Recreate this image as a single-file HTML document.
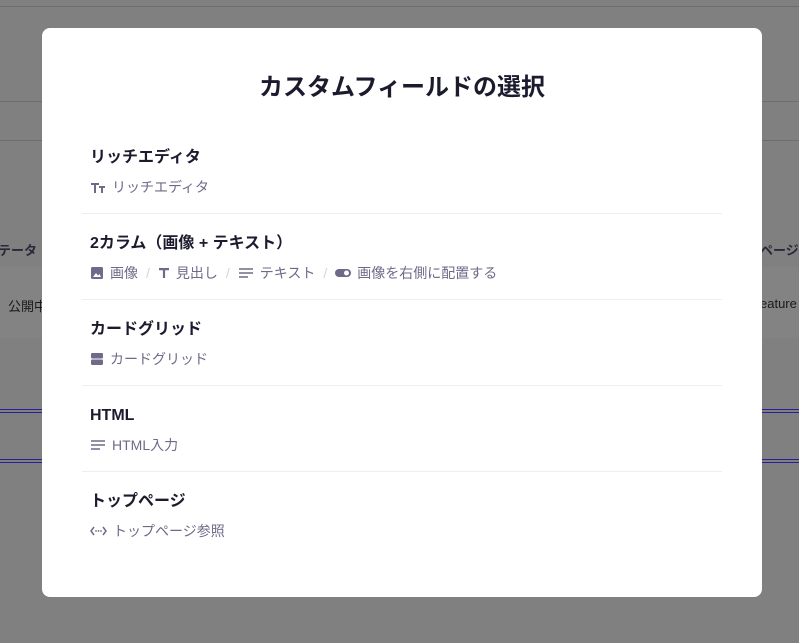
<!DOCTYPE html>
<html><head><meta charset="utf-8"><style>
body{margin:0;width:799px;height:643px;background:#808080;position:relative;overflow:hidden;font-family:"Liberation Sans","Noto Sans CJK JP",sans-serif}
.l{position:absolute;left:0;width:799px;height:1px}
.t{position:absolute;color:#2a2838;font-size:13px;font-weight:bold}
.modal{position:absolute;left:42px;top:28px;width:720px;height:569px;background:#fff;border-radius:8px}
h1{position:absolute;top:44px;left:0;width:720px;text-align:center;margin:0;font-size:24px;line-height:32px;color:#1c1b2e;font-weight:bold}
.row{position:absolute;left:40px;width:640px;height:86px}
.row .n{position:absolute;left:8px;top:10px;font-size:16px;line-height:20px;font-weight:bold;color:#1c1b2e}
.row .s{position:absolute;left:8px;top:41px;height:16px;font-size:14px;line-height:16px;color:#6e6b88;display:flex;align-items:center;white-space:nowrap}
.row .s svg{margin-right:6px;flex:none}
.sep{color:#d4d3dd;margin:0 8px}
.div{position:absolute;left:40px;width:640px;height:1px;background:#eeeef2}
</style></head><body>
<div class="l" style="top:6px;background:#6c6c72"></div>
<div class="l" style="top:101px;background:#6e6e72"></div>
<div class="l" style="top:140px;background:#6e6e72"></div>
<div style="position:absolute;left:0;top:267px;width:799px;height:71px;background:#838383"></div>
<div class="l" style="top:409px;background:#2a1f9a"></div>
<div class="l" style="top:412px;background:#2a1f9a"></div>
<div class="l" style="top:459px;background:#2a1f9a"></div>
<div class="l" style="top:462px;background:#2a1f9a"></div>
<div class="t" style="left:-2px;top:240px">テータ</div>
<div class="t" style="left:760px;top:240px">ページ</div>
<div class="t" style="left:8px;top:296px;font-weight:normal;color:#1a1a1a">公開中</div>
<div class="t" style="left:760px;top:296px;font-weight:normal;color:#1a1a1a">eature</div>
<div class="modal">
<h1>カスタムフィールドの選択</h1>
<div class="row" style="top:110px"><div class="n">リッチエディタ</div>
<div class="s"><svg width="16" height="14" viewBox="0 0 16 14"><path d="M1 3h8v2H6v8H4V5H1z M9 6h6v2h-2v5h-2V8H9z" fill="#6e6b88"/></svg>リッチエディタ</div></div>
<div class="div" style="top:185px"></div>
<div class="row" style="top:196px"><div class="n">2カラム（画像 + テキスト）</div>
<div class="s"><svg width="14" height="14" viewBox="0 0 14 14"><rect x="1" y="1" width="12" height="12" rx="1.5" fill="#6e6b88"/><path d="M3 11l3-4 2 2.5 1.5-1.5L11 11z" fill="#fff"/></svg>画像<span class="sep">/</span><svg width="12" height="14" viewBox="0 0 12 14"><path d="M1 2h10v2.2H7.1V12H4.9V4.2H1z" fill="#6e6b88"/></svg>見出し<span class="sep">/</span><svg width="16" height="12" viewBox="0 0 16 12"><path d="M1 2h14M1 6h14M1 10h9" stroke="#6e6b88" stroke-width="1.6"/></svg>テキスト<span class="sep">/</span><svg width="16" height="12" viewBox="0 0 16 12"><rect x="0" y="2" width="16" height="8" rx="4" fill="#6e6b88"/><circle cx="11.5" cy="6" r="2.5" fill="#fff"/></svg>画像を右側に配置する</div></div>
<div class="div" style="top:271px"></div>
<div class="row" style="top:282px"><div class="n">カードグリッド</div>
<div class="s"><svg width="14" height="14" viewBox="0 0 14 14"><rect x="1" y="1" width="12" height="5.5" rx="1.2" fill="#6e6b88"/><rect x="1" y="7.5" width="12" height="5.5" rx="1.2" fill="#6e6b88"/></svg>カードグリッド</div></div>
<div class="div" style="top:357px"></div>
<div class="row" style="top:368px"><div class="n">HTML</div>
<div class="s"><svg width="16" height="12" viewBox="0 0 16 12"><path d="M1 2h14M1 6h14M1 10h9" stroke="#6e6b88" stroke-width="1.6"/></svg>HTML入力</div></div>
<div class="div" style="top:443px"></div>
<div class="row" style="top:454px"><div class="n">トップページ</div>
<div class="s"><svg width="17" height="12" viewBox="0 0 17 12"><path d="M4 2L1 6l3 4M13 2l3 4-3 4" stroke="#6e6b88" stroke-width="1.5" fill="none"/><circle cx="6" cy="6" r=".9" fill="#6e6b88"/><circle cx="8.5" cy="6" r=".9" fill="#6e6b88"/><circle cx="11" cy="6" r=".9" fill="#6e6b88"/></svg>トップページ参照</div></div>
</div>
</body></html>
